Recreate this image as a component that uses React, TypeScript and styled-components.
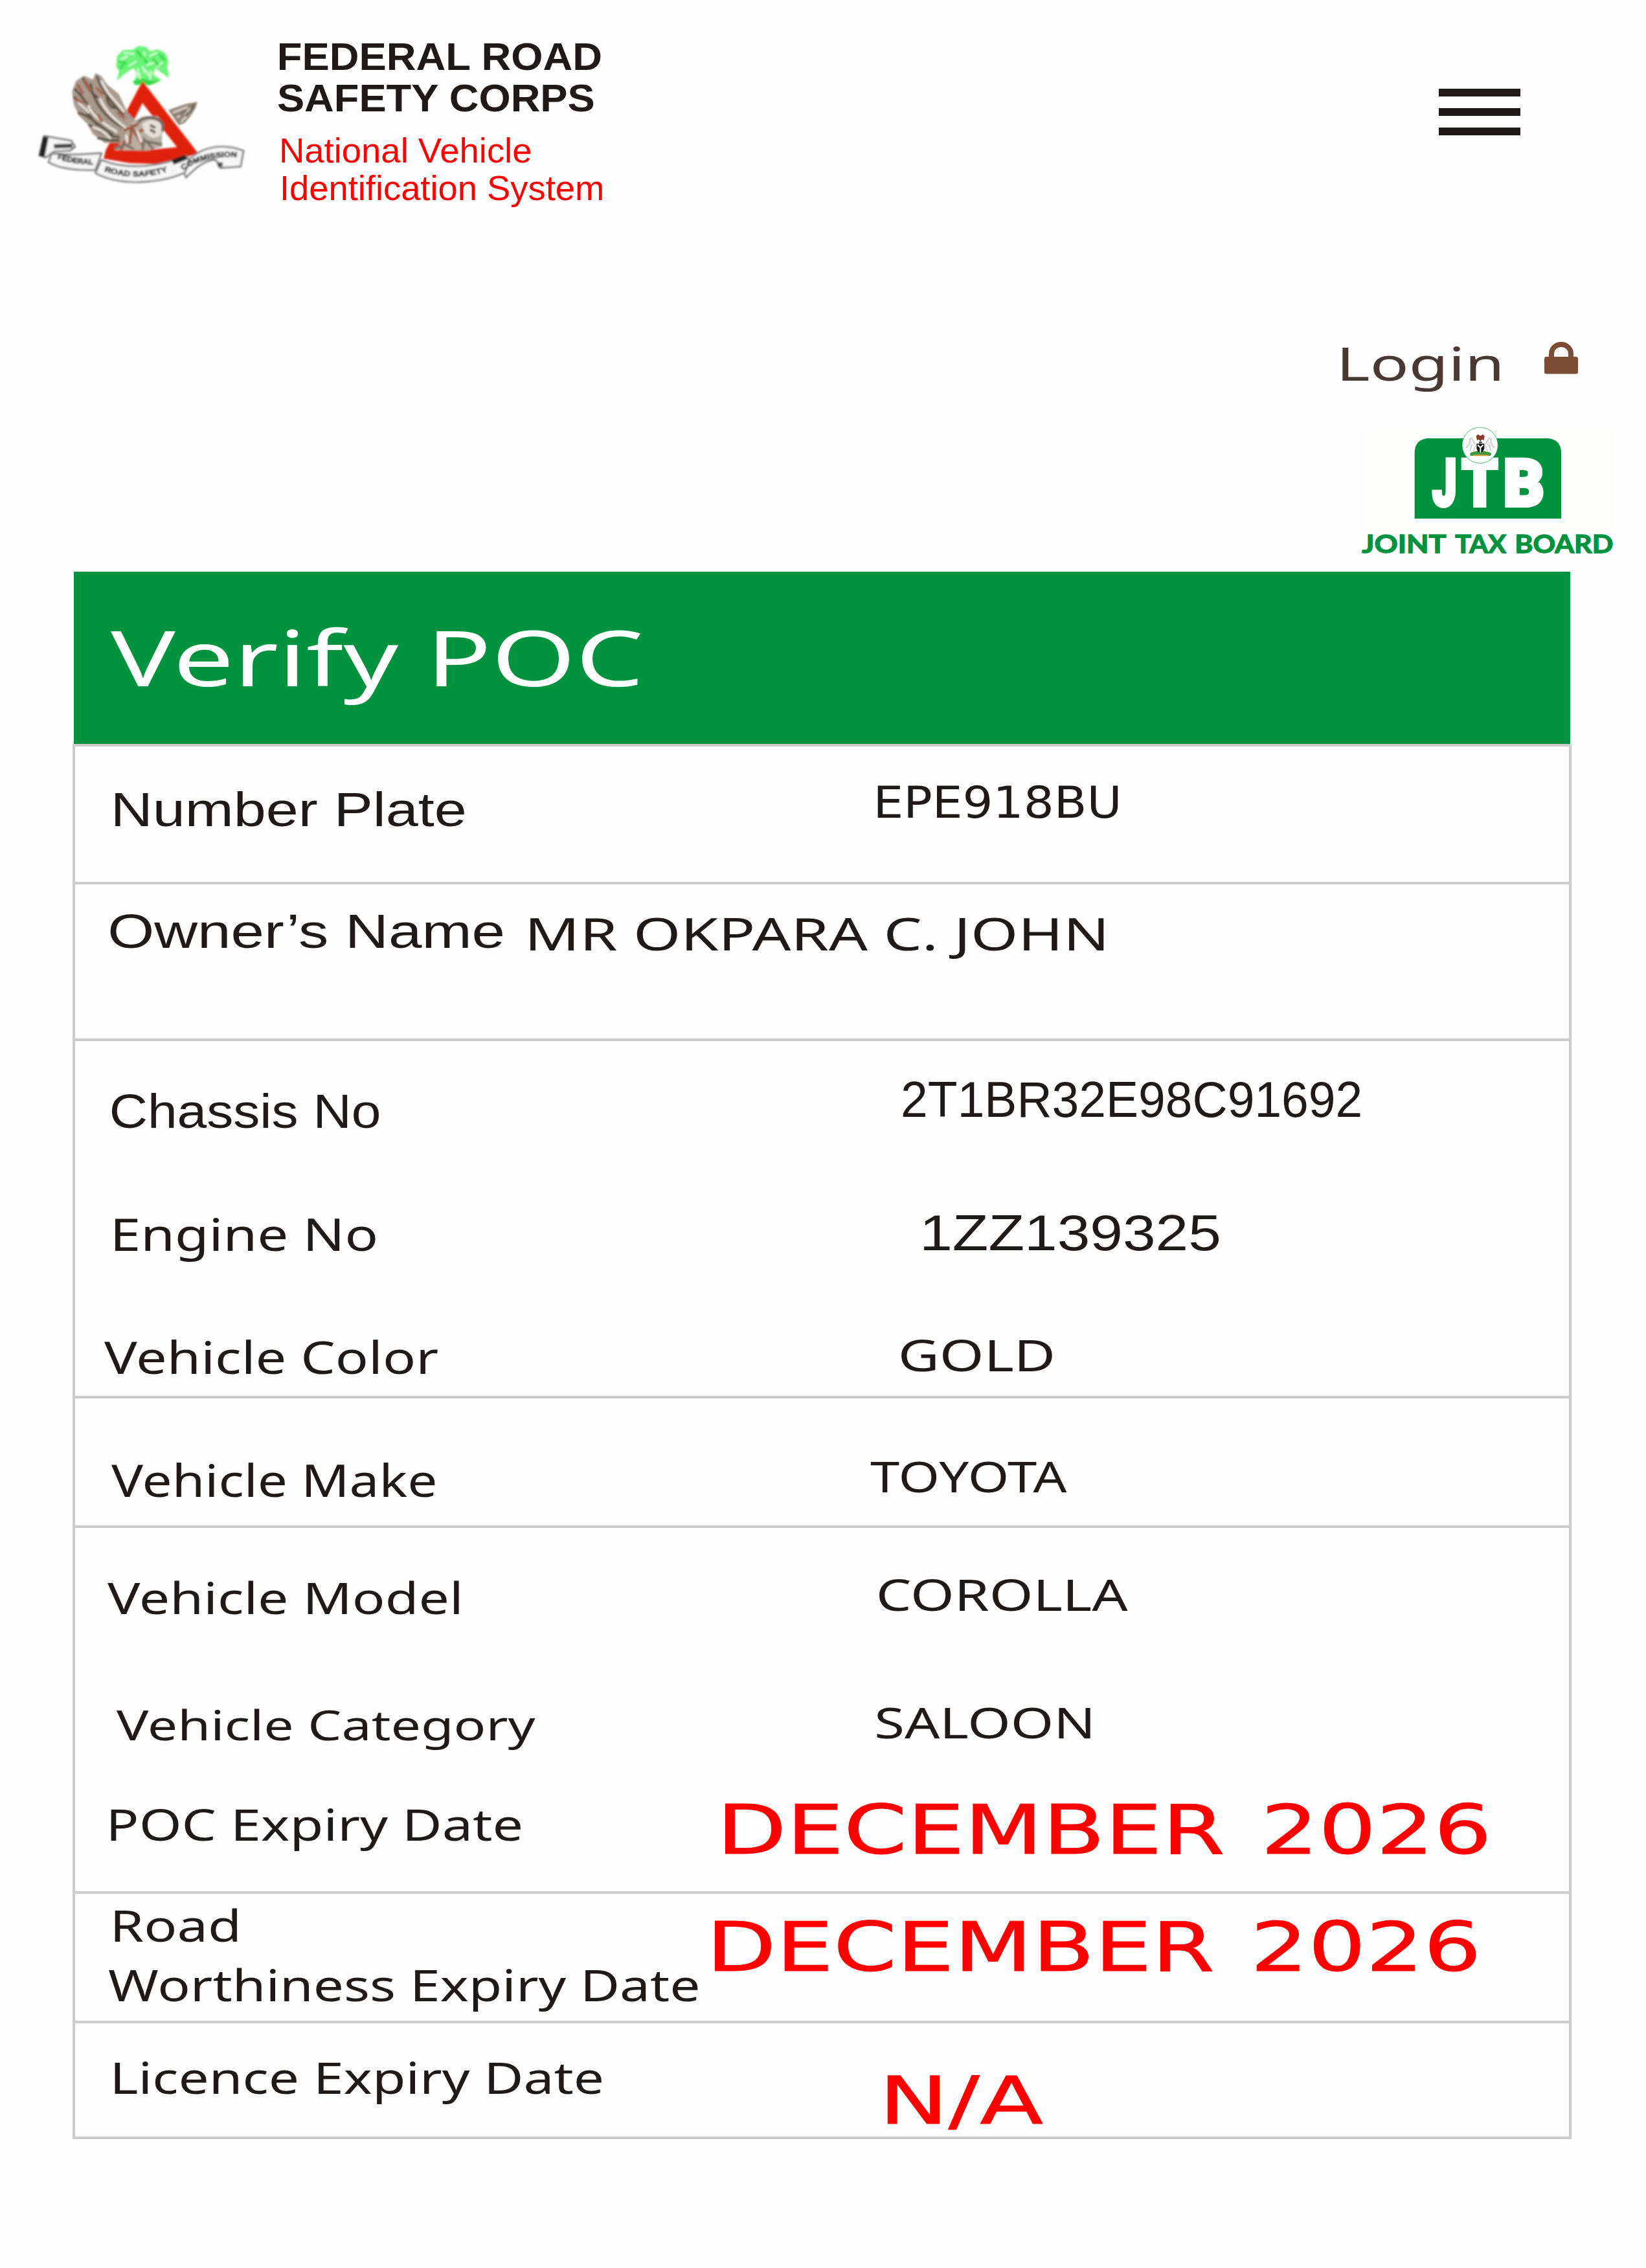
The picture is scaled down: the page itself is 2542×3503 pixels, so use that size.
import React, { useLayoutEffect, useRef, useState } from "react";
import styled, { createGlobalStyle, css } from "styled-components";

type Face = "arial" | "humanist" | "wide";

const FACES: Record<Face, string> = {
  arial: '"Liberation Sans", Arial, sans-serif',
  humanist: '"Noto Sans", "Segoe UI", sans-serif',
  wide: '"DejaVu Sans", Tahoma, sans-serif',
};

interface FitTextProps {
  text: string;
  width: number;
  size: number;
  face?: Face;
  bold?: boolean;
  line?: number;
  indent?: number;
  drop?: number;
  color?: string;
  outline?: number;
  wordGap?: number;
}

interface RowData {
  height: number;
  labels: FitTextProps[];
  value: FitTextProps;
}

const GlobalStyle = createGlobalStyle`
  body {
    margin: 0;
    background: #fefefe;
    color: #1f1a17;
    font-family: "Noto Sans", "Segoe UI", sans-serif;
  }
`;

const TextBox = styled.div<{ $width: number; $line: number; $indent: number; $drop: number }>`
  flex: none;
  width: ${(p) => p.$width}px;
  height: ${(p) => p.$line}px;
  line-height: ${(p) => p.$line}px;
  margin-left: ${(p) => p.$indent}px;
  margin-top: ${(p) => p.$drop}px;
`;

const TextRun = styled.span<{
  $size: number;
  $face: Face;
  $bold: boolean;
  $color: string;
  $outline: number;
  $wordGap: number;
}>`
  display: block;
  width: max-content;
  white-space: nowrap;
  transform-origin: 0 50%;
  font-family: ${(p) => FACES[p.$face]};
  font-size: ${(p) => p.$size}px;
  font-weight: ${(p) => (p.$bold ? 700 : 400)};
  word-spacing: ${(p) => p.$wordGap}px;
  color: ${(p) => p.$color};
  ${(p) =>
    p.$outline > 0 &&
    css`
      -webkit-text-stroke: ${p.$outline}px ${p.$color};
    `}
`;

// Stretches one line of text so that its ink is exactly `width` pixels wide.
const FitText = (props: FitTextProps) => {
  const {
    text,
    width,
    size,
    face = "humanist",
    bold = false,
    line = 80,
    indent = 0,
    drop = 0,
    color = "inherit",
    outline = 0,
    wordGap = 0,
  } = props;
  const ref = useRef<HTMLSpanElement>(null);
  const [transform, setTransform] = useState("none");

  useLayoutEffect(() => {
    const ctx = document.createElement("canvas").getContext("2d");
    if (!ref.current || !ctx) {
      return;
    }
    ctx.font = `${bold ? 700 : 400} ${size}px ${FACES[face]}`;
    const box = ctx.measureText(text);
    const gaps = (text.split(" ").length - 1) * wordGap;
    const scale = width / (box.actualBoundingBoxLeft + box.actualBoundingBoxRight + gaps);
    setTransform(`translateX(${box.actualBoundingBoxLeft * scale}px) scaleX(${scale})`);
  }, [text, width, size, face, bold, wordGap]);

  return (
    <TextBox $width={width} $line={line} $indent={indent} $drop={drop}>
      <TextRun
        ref={ref}
        $size={size}
        $face={face}
        $bold={bold}
        $color={color}
        $outline={outline}
        $wordGap={wordGap}
        style={{ transform }}
      >
        {text}
      </TextRun>
    </TextBox>
  );
};

const Page = styled.div`
  display: flex;
  flex-direction: column;
  width: 2542px;
  height: 3503px;
  overflow: hidden;
  background: #fefefe;
`;

const Header = styled.header`
  display: flex;
  align-items: flex-start;
  box-sizing: border-box;
  height: 520px;
  padding-left: 40px;
`;

const Emblem = styled.svg`
  flex: none;
  width: 360px;
  height: 250px;
  margin-top: 50px;
`;

const Brand = styled.div`
  display: flex;
  flex-direction: column;
  padding: 59px 0 0 29px;
`;

const MenuButton = styled.button`
  display: flex;
  flex-direction: column;
  gap: 17.6px;
  width: 126px;
  margin: 137px 194px 0 auto;
  padding: 0;
  border: none;
  background: none;
`;

const MenuBar = styled.span`
  height: 12.4px;
  background: #1f1a17;
`;

const LoginRow = styled.div`
  display: flex;
  justify-content: flex-end;
  height: 80px;
  padding-right: 105px;
`;

const LockIcon = styled.svg`
  width: 52px;
  height: 52px;
  margin: 6px 0 0 69px;
`;

const BoardLogo = styled.svg`
  flex: none;
  align-self: flex-end;
  width: 400px;
  height: 220px;
  margin: 60px 45px 3px 0;
`;

const TitleBar = styled.div`
  display: flex;
  flex: none;
  width: 2311px;
  height: 266px;
  margin-left: 114px;
  background: #00923f;
`;

const Card = styled.main`
  display: flex;
  flex-direction: column;
  flex: none;
  box-sizing: border-box;
  width: 2315px;
  margin-left: 112px;
  border: 4px solid #cccccc;
`;

const Section = styled.section`
  & + & {
    border-top: 4px solid #cccccc;
  }
`;

const Row = styled.div<{ $height: number }>`
  display: flex;
  align-items: flex-start;
  height: ${(p) => p.$height}px;
`;

const LabelStack = styled.div`
  display: flex;
  flex-direction: column;
`;

const SECTIONS: RowData[][] = [
  [
    {
      height: 209,
      labels: [{ text: "Number Plate", face: "arial", size: 74, width: 539, indent: 62, drop: 58, outline: 0.6 }],
      value: { text: "EPE918BU", face: "wide", size: 68.5, width: 372, indent: 638, drop: 46 },
    },
  ],
  [
    {
      height: 238,
      labels: [{ text: "Owner’s Name", face: "arial", size: 74, width: 606, indent: 54, drop: 33, outline: 0.6 }],
      value: { text: "MR OKPARA C. JOHN", size: 70, width: 887, indent: 42, drop: 35 },
    },
  ],
  [
    {
      height: 185,
      labels: [{ text: "Chassis No", face: "arial", size: 74, width: 414, indent: 56, drop: 69, outline: 0.6 }],
      value: { text: "2T1BR32E98C91692", face: "arial", size: 78, width: 707, indent: 808, drop: 50, outline: 0.6 },
    },
    {
      height: 190,
      labels: [{ text: "Engine No", size: 70, width: 403, indent: 61, drop: 71.5 }],
      value: { text: "1ZZ139325", face: "arial", size: 78, width: 457, indent: 846, drop: 71, outline: 0.6 },
    },
    {
      height: 173,
      labels: [{ text: "Vehicle Color", size: 70, width: 515, indent: 45, drop: 72 }],
      value: { text: "GOLD", size: 67, width: 233, indent: 716, drop: 68.5 },
    },
  ],
  [
    {
      height: 196,
      labels: [{ text: "Vehicle Make", size: 69, width: 500, indent: 56, drop: 85 }],
      value: { text: "TOYOTA", size: 65, width: 304, indent: 672, drop: 80 },
    },
  ],
  [
    {
      height: 200,
      labels: [{ text: "Vehicle Model", size: 67, width: 543, indent: 50, drop: 67 }],
      value: { text: "COROLLA", size: 67, width: 384, indent: 649, drop: 62 },
    },
    {
      height: 191,
      labels: [{ text: "Vehicle Category", size: 64, width: 647, indent: 64, drop: 64 }],
      value: { text: "SALOON", size: 66, width: 330, indent: 527, drop: 59 },
    },
    {
      height: 170,
      labels: [{ text: "POC Expiry Date", size: 68, width: 633, indent: 55, drop: 26 }],
      value: {
        text: "DECEMBER 2026",
        face: "wide",
        size: 106,
        width: 1175,
        indent: 316,
        drop: 36,
        color: "#ff0000",
        outline: 0.8,
        wordGap: 8,
      },
    },
  ],
  [
    {
      height: 196,
      labels: [
        { text: "Road", size: 68, width: 190, indent: 61, drop: 8 },
        { text: "Worthiness Expiry Date", size: 67, width: 911, indent: 51, drop: 12 },
      ],
      value: {
        text: "DECEMBER 2026",
        face: "wide",
        size: 106,
        width: 1175,
        indent: 26,
        drop: 43,
        color: "#ff0000",
        outline: 0.8,
        wordGap: 8,
      },
    },
  ],
  [
    {
      height: 175,
      labels: [{ text: "Licence Expiry Date", size: 68, width: 752, indent: 61, drop: 43 }],
      value: { text: "N/A", face: "wide", size: 101, width: 241, indent: 441, drop: 80, color: "#ff0000", outline: 0.8 },
    },
  ],
];

const CorpsEmblem = () => (
  <Emblem viewBox="0 0 1080 750" fill="none">
    <defs>
      <filter id="soft" x="-5%" y="-5%" width="110%" height="110%">
        <feGaussianBlur stdDeviation="4" />
      </filter>
    </defs>
    <g filter="url(#soft)">
      {/* tree */}
      <g fill="#6cf278">
        <path d="M420 225 L432 180 L418 160 L422 110 L450 82 L495 80 L520 64 L555 66 L575 88 L610 78 L645 95 L660 130 L655 165 L664 212 L625 185 L600 165 L590 195 L628 222 L590 240 L500 240 L512 190 L500 165 L460 190 Z" />
        <path d="M495 225 L535 212 L580 225 L625 222 L575 245 L505 243 Z" fill="#35d84b" />
      </g>
      <g stroke="#d4fcd8" strokeWidth="8" strokeLinecap="round">
        <path d="M455 95 L500 100 M440 125 L470 112 M575 108 L605 95 M560 150 L595 140 M480 155 L510 135 M525 190 L530 215 M555 175 L570 200 M610 160 L630 140 M545 92 L552 105 M540 160 L550 185 M520 170 L515 205 M580 180 L575 215" />
      </g>
      <g stroke="#35dd4d" strokeWidth="12" strokeLinecap="round">
        <path d="M435 135 L465 145 M515 88 L535 112 M550 125 L560 142 M590 125 L612 150 M440 165 L450 150 M620 105 L640 125" />
      </g>
      {/* right wing */}
      <path d="M660 360 L740 332 L795 322 L785 352 L765 385 L735 420 L708 430 Z" fill="#8f8172" />
      <path d="M680 372 L750 345 M700 395 L768 352 M718 415 L760 375" stroke="#e2d9d0" strokeWidth="8" />
      <path d="M715 385 L745 360 M745 390 L780 335" stroke="#62544a" strokeWidth="7" />
      {/* triangle */}
      <path fillRule="evenodd" d="M540 226 L798 560 L740 578 L600 610 L480 606 L360 585 L370 545 Z M540 328 L436 538 L560 545 L700 532 Z" fill="#e0240e" />
      {/* left wing */}
      <path d="M322 188 L352 205 L375 240 L430 285 L468 365 L512 415 L520 470 L430 512 L365 512 L310 470 L285 425 L245 385 L222 335 L214 275 L232 225 L270 200 L310 220 Z" fill="#a89a8c" />
      <g stroke="#5d4f42" strokeWidth="11" strokeLinecap="round">
        <path d="M330 205 C345 260 400 330 450 380 M300 240 C310 320 370 400 450 440 M265 215 C290 260 300 280 330 300 M226 262 C270 300 300 370 360 420 M224 300 C260 330 280 370 330 430 M245 375 C290 380 330 430 400 470 M295 430 C340 460 370 480 430 485 M335 490 C370 500 400 502 430 500 M375 300 C380 340 400 350 420 350" />
      </g>
      <g stroke="#f0e9e3" strokeWidth="10" strokeLinecap="round">
        <path d="M350 225 C370 280 420 320 452 365 M345 310 C370 370 420 410 460 440 M290 340 C310 390 370 430 420 460 M312 440 C340 450 370 465 390 490 M245 325 L290 370" />
      </g>
      <g stroke="#a5614a" strokeWidth="13" strokeLinecap="round">
        <path d="M240 245 L262 280 M235 312 L262 325 M275 225 L300 270 M330 260 L355 285 M430 375 L455 395 M335 385 L350 410" />
      </g>
      {/* body and head */}
      <path d="M480 420 L540 390 L610 388 L640 425 L630 480 L632 530 L560 548 L410 545 L450 500 Z" fill="#b9aea2" />
      <path d="M540 425 C560 400 610 400 626 430 C640 470 615 490 590 488 C560 480 540 460 540 425 Z" fill="#e6e0d8" />
      <path d="M520 420 C540 385 620 385 636 430 L632 460 M575 430 L600 442 M575 450 L600 465" stroke="#6b6455" strokeWidth="12" />
      <path d="M455 455 L520 425 M480 520 L490 440 L540 520 M500 470 L545 450 M460 500 L440 545" stroke="#9c5a44" strokeWidth="13" />
      <path d="M410 538 L460 520 L500 540 M540 545 L548 495 L590 540 M555 505 L630 520" stroke="#7b7064" strokeWidth="12" />
      <path d="M515 455 L535 510 M465 475 L470 510" stroke="#f3eeea" strokeWidth="10" />
      {/* ribbon */}
      <g fill="#f6f6f6" stroke="#777" strokeWidth="8">
        <path d="M85 480 L210 502 L228 530 L205 548 L130 552 L92 580 L62 570 Z" />
        <path d="M120 560 C180 575 290 562 350 560 L322 638 C240 640 160 635 105 602 Z" />
        <path d="M722 622 C800 530 900 510 1008 548 L995 622 L900 628 L880 590 C830 590 790 625 742 672 Z" />
        <path d="M350 592 C450 632 600 635 740 570 L760 600 L735 650 C620 700 440 715 322 652 Z" />
      </g>
      <path d="M92 485 L74 575" stroke="#222" strokeWidth="26" />
      <path d="M130 528 L215 525 M890 612 L912 612" stroke="#444" strokeWidth="20" />
      <path d="M680 602 L742 578" stroke="#222" strokeWidth="24" />
      <path id="ribbonLeft" d="M145 586 Q230 614 330 612" />
      <path id="ribbonMid" d="M362 644 Q520 694 668 640" />
      <path id="ribbonRight" d="M728 640 Q830 566 995 580" />
      <g
        fill="#2e2e2e"
        stroke="#2e2e2e"
        strokeWidth="2"
        fontFamily="Liberation Sans, sans-serif"
        fontWeight="700"
        fontSize="36"
      >
        <text>
          <textPath href="#ribbonLeft" textLength="170" lengthAdjust="spacingAndGlyphs">
            FEDERAL
          </textPath>
        </text>
        <text>
          <textPath href="#ribbonMid" textLength="300" lengthAdjust="spacingAndGlyphs">
            ROAD SAFETY
          </textPath>
        </text>
        <text>
          <textPath href="#ribbonRight" textLength="262" lengthAdjust="spacingAndGlyphs">
            COMMISSION
          </textPath>
        </text>
      </g>
    </g>
  </Emblem>
);

const JointTaxBoardLogo = () => (
  <BoardLogo viewBox="171 480 1200 660">
    <rect x="186" y="492" width="1170" height="470" fill="#fdfdfc" />
    <path d="M434 903 V600 Q434 531 505 531 H1042 Q1113 531 1113 600 V903 Z" fill="#00923f" />
    <g
      fill="#fff"
      stroke="#fff"
      strokeWidth="18"
      fontFamily="Roboto, sans-serif"
      fontWeight="900"
      fontSize="300"
    >
      <text x="517" y="843" textLength="112" lengthAdjust="spacingAndGlyphs">J</text>
      <text x="653" y="843" textLength="166" lengthAdjust="spacingAndGlyphs">T</text>
      <text x="846" y="843" textLength="188" lengthAdjust="spacingAndGlyphs">B</text>
    </g>
    <circle cx="737" cy="563" r="83" fill="#fff" stroke="#00923f" strokeWidth="2" />
    {/* coat of arms */}
    <path d="M690 600 Q737 578 790 600 L785 612 H692 Z" fill="#3f9a3c" />
    <path d="M705 610 H775" stroke="#d79a3a" strokeWidth="6" />
    <path d="M721 556 H757 V578 Q752 594 739 599 Q726 594 721 578 Z" fill="#151515" />
    <path d="M726 562 L739 574 L752 562 M739 574 V598" stroke="#fff" strokeWidth="6" fill="none" />
    <path d="M719 520 L728 513 L739 520 L750 513 L758 520 L755 540 L746 536 L739 545 L731 536 L723 540 Z" fill="#8b3a2d" />
    <path d="M732 550 H746" stroke="#333" strokeWidth="7" />
    <g stroke="#c4c4c4" strokeWidth="4" fill="#f1f1f1">
      <path d="M716 560 L700 530 L688 534 L692 546 L682 562 L672 576 M700 560 L690 590 M716 565 L706 592" />
      <path d="M762 560 L778 530 L790 534 L786 546 L794 562 L804 576 M778 560 L788 590 M762 565 L772 592" />
    </g>
    <g
      fill="#00923f"
      stroke="#00923f"
      strokeWidth="4"
      fontFamily="Lato, sans-serif"
      fontWeight="700"
      fontSize="113"
    >
      <text x="190" y="1061" textLength="390" lengthAdjust="spacingAndGlyphs">JOINT</text>
      <text x="622" y="1061" textLength="236" lengthAdjust="spacingAndGlyphs">TAX</text>
      <text x="898" y="1061" textLength="456" lengthAdjust="spacingAndGlyphs">BOARD</text>
    </g>
  </BoardLogo>
);

function App() {
  return (
    <Page>
      <GlobalStyle />
      <Header>
        <CorpsEmblem />
        <Brand>
          <FitText text="FEDERAL ROAD" face="arial" bold size={59.6} width={498} line={58} indent={2} />
          <FitText text="SAFETY CORPS" face="arial" bold size={59.6} width={489} line={58} drop={6} />
          <FitText text="National Vehicle" face="arial" size={53} width={385} line={58} indent={6} drop={23} color="#ff0000" />
          <FitText text="Identification System" face="arial" size={53} width={494} line={58} indent={7} color="#ff0000" />
        </Brand>
        <MenuButton aria-label="Menu">
          <MenuBar />
          <MenuBar />
          <MenuBar />
        </MenuButton>
      </Header>
      <LoginRow>
        <FitText text="Login" size={72} width={244} color="#4a3835" />
        <LockIcon viewBox="0 0 52 52">
          <path d="M11 28 V20 A15 14 0 0 1 41 20 V28" fill="none" stroke="#7b4d35" strokeWidth="8" />
          <rect x="0" y="25" width="52" height="26.5" rx="3" fill="#7b4d35" />
        </LockIcon>
      </LoginRow>
      <JointTaxBoardLogo />
      <TitleBar>
        <FitText text="Verify POC" size={118} width={818} indent={57} drop={92} color="#ffffff" />
      </TitleBar>
      <Card>
        {SECTIONS.map((rows, i) => (
          <Section key={i}>
            {rows.map((row) => (
              <Row key={row.labels[0].text} $height={row.height}>
                <LabelStack>
                  {row.labels.map((label) => (
                    <FitText key={label.text} {...label} />
                  ))}
                </LabelStack>
                <FitText {...row.value} />
              </Row>
            ))}
          </Section>
        ))}
      </Card>
    </Page>
  );
}

export default App;
